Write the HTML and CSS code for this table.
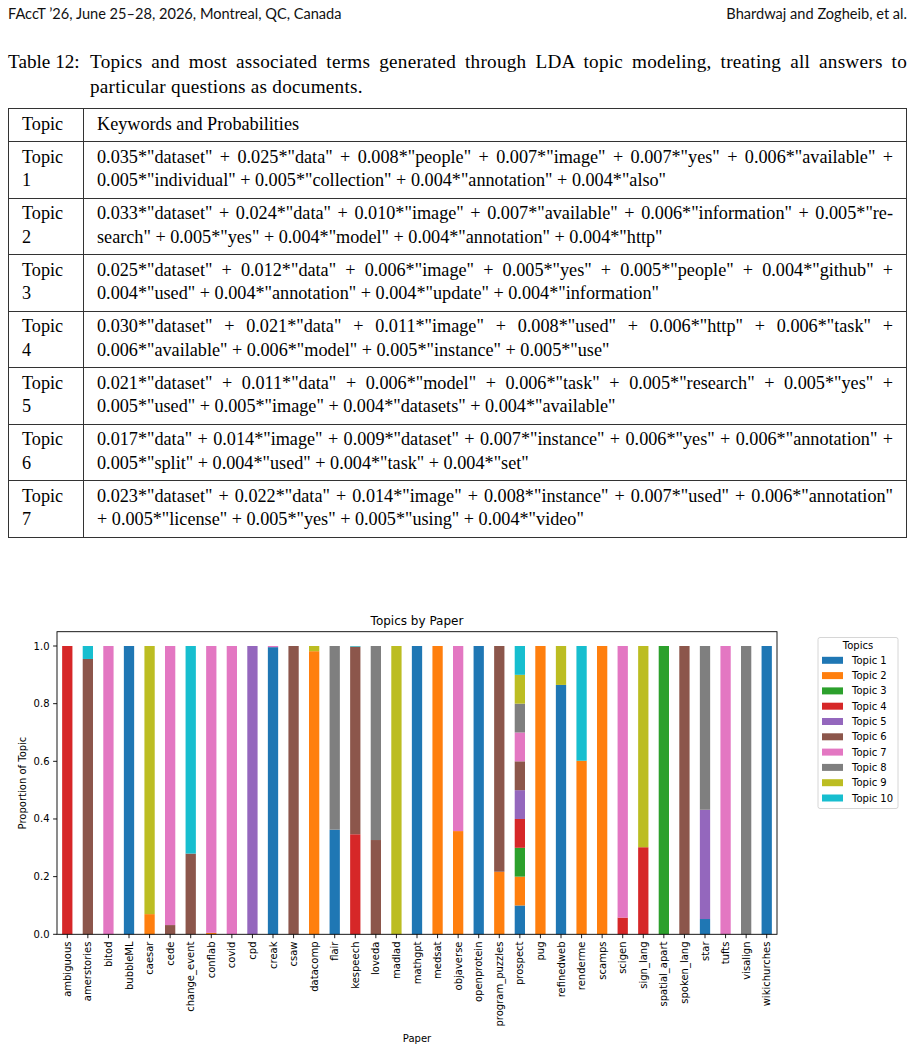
FILE: index.html
```html
<!DOCTYPE html>
<html lang="en">
<head>
<meta charset="utf-8">
<title>Table 12 – LDA topics</title>
<link rel="stylesheet" href="styles.css">
</head>
<body>
<div class="page">
  <header class="running">
    <span>FAccT ’26, June 25–28, 2026, Montreal, QC, Canada</span>
    <span>Bhardwaj and Zogheib, et al.</span>
  </header>

  <figure class="table-figure">
    <figcaption class="caption">
      <span class="cap-label">Table 12:</span>
      <span class="cap-text">
        <span class="line just">Topics and most associated terms generated through LDA topic modeling, treating all answers to</span>
        <span class="line">particular questions as documents.</span>
      </span>
    </figcaption>

    <table class="lda">
      <thead>
        <tr><th class="c-topic">Topic</th><th class="c-kw">Keywords and Probabilities</th></tr>
      </thead>
      <tbody>
        <tr>
          <td class="c-topic"><span class="line">Topic</span><span class="line">1</span></td>
          <td class="c-kw"><span class="line just">0.035*"dataset" + 0.025*"data" + 0.008*"people" + 0.007*"image" + 0.007*"yes" + 0.006*"available" +</span><span class="line">0.005*"individual" + 0.005*"collection" + 0.004*"annotation" + 0.004*"also"</span></td>
        </tr>
        <tr>
          <td class="c-topic"><span class="line">Topic</span><span class="line">2</span></td>
          <td class="c-kw"><span class="line just">0.033*"dataset" + 0.024*"data" + 0.010*"image" + 0.007*"available" + 0.006*"information" + 0.005*"re-</span><span class="line">search" + 0.005*"yes" + 0.004*"model" + 0.004*"annotation" + 0.004*"http"</span></td>
        </tr>
        <tr>
          <td class="c-topic"><span class="line">Topic</span><span class="line">3</span></td>
          <td class="c-kw"><span class="line just">0.025*"dataset" + 0.012*"data" + 0.006*"image" + 0.005*"yes" + 0.005*"people" + 0.004*"github" +</span><span class="line">0.004*"used" + 0.004*"annotation" + 0.004*"update" + 0.004*"information"</span></td>
        </tr>
        <tr>
          <td class="c-topic"><span class="line">Topic</span><span class="line">4</span></td>
          <td class="c-kw"><span class="line just">0.030*"dataset" + 0.021*"data" + 0.011*"image" + 0.008*"used" + 0.006*"http" + 0.006*"task" +</span><span class="line">0.006*"available" + 0.006*"model" + 0.005*"instance" + 0.005*"use"</span></td>
        </tr>
        <tr>
          <td class="c-topic"><span class="line">Topic</span><span class="line">5</span></td>
          <td class="c-kw"><span class="line just">0.021*"dataset" + 0.011*"data" + 0.006*"model" + 0.006*"task" + 0.005*"research" + 0.005*"yes" +</span><span class="line">0.005*"used" + 0.005*"image" + 0.004*"datasets" + 0.004*"available"</span></td>
        </tr>
        <tr>
          <td class="c-topic"><span class="line">Topic</span><span class="line">6</span></td>
          <td class="c-kw"><span class="line just">0.017*"data" + 0.014*"image" + 0.009*"dataset" + 0.007*"instance" + 0.006*"yes" + 0.006*"annotation" +</span><span class="line">0.005*"split" + 0.004*"used" + 0.004*"task" + 0.004*"set"</span></td>
        </tr>
        <tr>
          <td class="c-topic"><span class="line">Topic</span><span class="line">7</span></td>
          <td class="c-kw"><span class="line just">0.023*"dataset" + 0.022*"data" + 0.014*"image" + 0.008*"instance" + 0.007*"used" + 0.006*"annotation"</span><span class="line">+ 0.005*"license" + 0.005*"yes" + 0.005*"using" + 0.004*"video"</span></td>
        </tr>
      </tbody>
    </table>
  </figure>

  <figure class="chart-figure">
    <svg id="chart" class="chart" width="915" height="451" viewBox="0 0 915 451" xmlns="http://www.w3.org/2000/svg">
      <g id="plot" transform="translate(0,-600)">
        <text class="ch-title" x="417" y="624.5" text-anchor="middle">Topics by Paper</text>
        <g id="bars"></g>
        <g id="yaxis"></g>
        <g id="xaxis"></g>
        <rect class="spine" x="57" y="631.7" width="720" height="302.6"></rect>
        <text class="ch-label" transform="translate(25.5,783) rotate(-90)" text-anchor="middle">Proportion of Topic</text>
        <text class="ch-label" x="417" y="1042" text-anchor="middle">Paper</text>
        <g id="legend">
          <rect class="legend-box" x="818" y="637.5" width="80" height="171" rx="2" ry="2"></rect>
          <text class="ch-legend" x="858" y="648.8" text-anchor="middle">Topics</text>
        </g>
      </g>
    </svg>
  </figure>
</div>
<script src="script.js"></script>
</body>
</html>
```

FILE: styles.css
```css
html, body {
  margin: 0;
  padding: 0;
  background: #ffffff;
  color: #000000;
}

.page {
  width: 899px;
  padding: 0 8px;
}

.running {
  display: flex;
  justify-content: space-between;
  align-items: center;
  height: 26px;
  font-family: "Lato", "Liberation Sans", sans-serif;
  font-size: 14.6px;
  color: #111;
}

.table-figure {
  margin: 23px 0 0 0;
  font-family: "Liberation Serif", "DejaVu Serif", serif;
  font-size: 18.2px;
}

.caption {
  display: flex;
  line-height: 25px;
  font-size: 19.2px;
  letter-spacing: 0.25px;
}

.cap-label {
  flex: 0 0 82px;
  letter-spacing: 0;
}

.cap-text {
  flex: 1 1 auto;
  display: flex;
  flex-direction: column;
}

.line {
  display: block;
  white-space: nowrap;
}

.line.just {
  white-space: normal;
  text-align: justify;
  text-align-last: justify;
}

.lda {
  margin-top: 9px;
  width: 899px;
  border-collapse: collapse;
  border: 1px solid #333;
  line-height: 23.5px;
}

.lda th,
.lda td {
  border: 1px solid #333;
  padding: 3.5px 13px 5px 13px;
  text-align: left;
  font-weight: normal;
  vertical-align: top;
}

.lda .c-topic {
  width: 48px;
}

.chart-figure {
  margin: 62px 0 0 -8px;
  width: 915px;
  height: 451px;
}

.chart {
  display: block;
  font-family: "DejaVu Sans", sans-serif;
}

.ch-title {
  font-size: 12px;
  fill: #000;
}

.ch-label,
.ch-tick,
.ch-legend {
  font-size: 10px;
  fill: #000;
}

.spine {
  fill: none;
  stroke: #000;
  stroke-width: 0.9;
}

.tick {
  stroke: #000;
  stroke-width: 0.9;
}

.legend-box {
  fill: #ffffff;
  stroke: #d6d6d6;
  stroke-width: 1;
}
```

FILE: script.js
```js
(function () {
  var NS = "http://www.w3.org/2000/svg";
  var colors = ["#1f77b4", "#ff7f0e", "#2ca02c", "#d62728", "#9467bd",
                "#8c564b", "#e377c2", "#7f7f7f", "#bcbd22", "#17becf"];

  var data = [
    ["ambiguous", {4: 1}],
    ["amerstories", {6: 0.955, 10: 0.045}],
    ["bitod", {7: 1}],
    ["bubbleML", {1: 1}],
    ["caesar", {2: 0.07, 9: 0.93}],
    ["cede", {6: 0.032, 7: 0.968}],
    ["change_event", {6: 0.28, 10: 0.72}],
    ["conflab", {2: 0.005, 7: 0.995}],
    ["covid", {7: 1}],
    ["cpd", {5: 1}],
    ["creak", {1: 0.996, 7: 0.004}],
    ["csaw", {6: 1}],
    ["datacomp", {2: 0.982, 9: 0.018}],
    ["flair", {1: 0.363, 8: 0.637}],
    ["kespeech", {4: 0.347, 6: 0.651, 10: 0.002}],
    ["loveda", {6: 0.327, 8: 0.673}],
    ["madlad", {9: 1}],
    ["mathgpt", {1: 1}],
    ["medsat", {2: 1}],
    ["objaverse", {2: 0.358, 7: 0.642}],
    ["openprotein", {1: 1}],
    ["program_puzzles", {2: 0.217, 6: 0.783}],
    ["prospect", {1: 0.1, 2: 0.1, 3: 0.1, 4: 0.1, 5: 0.1, 6: 0.1, 7: 0.1, 8: 0.1, 9: 0.1, 10: 0.1}],
    ["pug", {2: 1}],
    ["refinedweb", {1: 0.865, 9: 0.135}],
    ["renderme", {2: 0.602, 10: 0.398}],
    ["scamps", {2: 1}],
    ["scigen", {4: 0.058, 7: 0.942}],
    ["sign_lang", {4: 0.302, 9: 0.698}],
    ["spatial_apart", {3: 1}],
    ["spoken_lang", {6: 1}],
    ["star", {1: 0.053, 5: 0.379, 8: 0.568}],
    ["tufts", {7: 1}],
    ["visalign", {8: 1}],
    ["wikichurches", {1: 1}]
  ];

  var X0 = 57, PW = 720, Y0 = 934.3, S = 288.3;
  var U = PW / data.length;
  var BW = U * 0.5;

  function el(name, attrs, text) {
    var e = document.createElementNS(NS, name);
    for (var k in attrs) e.setAttribute(k, attrs[k]);
    if (text !== undefined) e.textContent = text;
    return e;
  }

  var bars = document.getElementById("bars");
  var xaxis = document.getElementById("xaxis");
  var yaxis = document.getElementById("yaxis");
  var legend = document.getElementById("legend");

  data.forEach(function (row, i) {
    var cx = X0 + (i + 0.5) * U;
    var acc = 0;
    for (var t = 1; t <= 10; t++) {
      var v = row[1][t];
      if (!v) continue;
      bars.appendChild(el("rect", {
        x: (cx - BW / 2).toFixed(2),
        y: (Y0 - (acc + v) * S).toFixed(2),
        width: BW.toFixed(2),
        height: (v * S).toFixed(2),
        fill: colors[t - 1]
      }));
      acc += v;
    }
    xaxis.appendChild(el("line", {"class": "tick", x1: cx, x2: cx, y1: Y0, y2: Y0 + 3.9}));
    xaxis.appendChild(el("text", {
      "class": "ch-tick",
      x: cx, y: 941.5,
      "text-anchor": "end",
      "dominant-baseline": "central",
      transform: "rotate(-90 " + cx.toFixed(2) + " 941.5)"
    }, row[0]));
  });

  for (var k = 0; k <= 5; k++) {
    var v = k * 0.2;
    var y = Y0 - v * S;
    yaxis.appendChild(el("line", {"class": "tick", x1: 53.1, x2: 57, y1: y, y2: y}));
    yaxis.appendChild(el("text", {
      "class": "ch-tick", x: 49.5, y: y,
      "text-anchor": "end", "dominant-baseline": "central"
    }, v.toFixed(1)));
  }

  for (var j = 0; j < 10; j++) {
    var cy = 660.3 + j * 15.3;
    legend.appendChild(el("rect", {x: 822, y: cy - 3.5, width: 21, height: 7, fill: colors[j]}));
    legend.appendChild(el("text", {
      "class": "ch-legend", x: 852, y: cy, "dominant-baseline": "central"
    }, "Topic " + (j + 1)));
  }
})();
```
